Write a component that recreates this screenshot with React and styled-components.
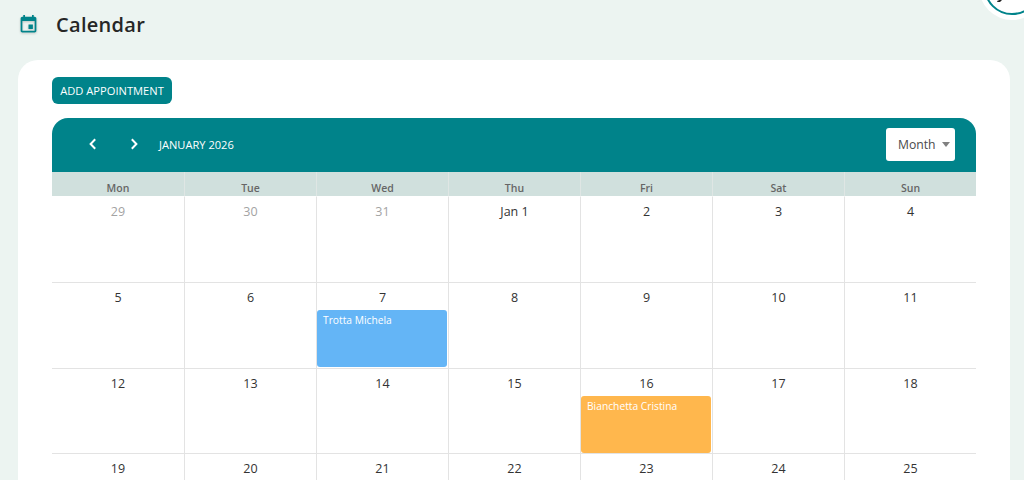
import React from "react";
import styled, { createGlobalStyle } from "styled-components";

const Global = createGlobalStyle`
  html, body { margin: 0; padding: 0; height: 100%; overflow: hidden; background: #ecf4f1; }
  body { font-family: "Open Sans", "Noto Sans", sans-serif; }
`;

const Page = styled.div`
  position: relative;
  height: 480px;
  overflow: hidden;
  padding: 0 14px 0 18px;
`;

const TitleBar = styled.header`
  height: 60px;
  padding-bottom: 12px;
  box-sizing: border-box;
  display: flex;
  align-items: center;
  gap: 17px;
`;

const CalendarIcon = styled.svg`
  filter: drop-shadow(0 1px 1px rgba(0, 0, 0, 0.2));
`;

const Title = styled.h1`
  margin: 0;
  font-size: 20px;
  font-weight: 600;
  letter-spacing: 0.3px;
  color: #262626;
`;

const Avatar = styled.div`
  position: absolute;
  right: -16px;
  top: -41px;
  width: 52px;
  height: 52px;
  border-radius: 50%;
  background: #fff;
  border: 2px solid #00838a;
  box-shadow: 0 0 0 5px #fff;
  box-sizing: content-box;
`;

const AvatarMark = styled.svg`
  position: absolute;
  left: 11px;
  top: 39px;
`;

const Card = styled.main`
  background: #fff;
  border-radius: 20px;
  padding: 17px 34px 0;
  height: 440px;
  box-sizing: border-box;
`;

const AddButton = styled.button`
  display: block;
  height: 27px;
  width: 120px;
  padding: 0;
  border: 0;
  border-radius: 6px;
  background: #00838a;
  color: #fff;
  font: 400 11.15px "Open Sans", sans-serif;
`;

const Calendar = styled.section`
  margin-top: 14px;
`;

const Toolbar = styled.div`
  height: 54px;
  padding: 0 21px 2px 32px;
  box-sizing: border-box;
  background: #00838a;
  border-radius: 16px 16px 0 0;
  display: flex;
  align-items: center;
  color: #fff;
`;

const NavButton = styled.button`
  width: 18px;
  height: 18px;
  padding: 0;
  margin-right: ${(p) => p.$gap}px;
  border: 0;
  background: none;
  color: #fff;
  display: flex;
  align-items: center;
  justify-content: center;
`;

const MonthLabel = styled.div`
  font-size: 11.1px;
  flex: 1;
`;

const ViewSelect = styled.div`
  width: 69px;
  height: 33px;
  border-radius: 3px;
  background: #fff;
  color: #4a4a4a;
  font-size: 12.2px;
  display: flex;
  align-items: center;
  padding-left: 12px;
  box-sizing: border-box;
  gap: 6px;
`;

const Caret = styled.span`
  width: 0;
  height: 0;
  border-left: 4.5px solid transparent;
  border-right: 4.5px solid transparent;
  border-top: 5px solid #808080;
`;

const Grid = styled.div`
  display: grid;
  grid-template-columns: repeat(7, 132px);
`;

const WeekDay = styled.div`
  height: 25px;
  background: #d0e0dd;
  background-clip: padding-box;
  border-left: ${(p) => (p.$first ? "0" : "1px solid #dfe6e4")};
  border-bottom: 1px solid #fff;
  box-sizing: border-box;
  text-align: center;
  color: #666;
  font-size: 10.5px;
  font-weight: 600;
  line-height: 32px;
`;

const Cell = styled.div`
  height: 85.8px;
  box-sizing: border-box;
  border-left: ${(p) => (p.$first ? "0" : "1px solid #e3e3e3")};
  border-bottom: 1px solid #e3e3e3;
  padding: 6px 0 0;
  text-align: center;
`;

const DayNumber = styled.div`
  height: 18px;
  font-size: 12.5px;
  line-height: 18px;
  color: ${(p) => (p.$muted ? "#a3a3a3" : "#333")};
`;

const Event = styled.div`
  margin: 3px 1px 0 0;
  height: 57px;
  border-radius: 3px;
  background: ${(p) => p.$color};
  color: #fff;
  font-size: 10.25px;
  line-height: 16px;
  text-align: left;
  padding: 2px 6px;
  box-sizing: border-box;
`;

const days = ["Mon", "Tue", "Wed", "Thu", "Fri", "Sat", "Sun"];
const cells = [
  ["29", true], ["30", true], ["31", true], ["Jan 1"], ["2"], ["3"], ["4"],
  ["5"], ["6"], ["7", false, "Trotta Michela", "#64b5f6"], ["8"], ["9"], ["10"], ["11"],
  ["12"], ["13"], ["14"], ["15"], ["16", false, "Bianchetta Cristina", "#ffb74d"], ["17"], ["18"],
  ["19"], ["20"], ["21"], ["22"], ["23"], ["24"], ["25"],
];

const Chevron = ({ d }) => (
  <svg width="12" height="12" viewBox="0 0 12 12" fill="none" stroke="currentColor" strokeWidth="2">
    <path d={d} />
  </svg>
);

export default function App() {
  return (
    <Page>
      <Global />
      <TitleBar>
        <CalendarIcon width="21" height="21" viewBox="0 0 24 24" fill="#00838a">
          <path d="M17 12h-5v5h5v-5zM16 1v2H8V1H6v2H5c-1.1 0-2 .9-2 2v14c0 1.1.9 2 2 2h14c1.1 0 2-.9 2-2V5c0-1.1-.9-2-2-2h-1V1h-2zm3 18H5V8h14v11z" />
        </CalendarIcon>
        <Title>Calendar</Title>
      </TitleBar>
      <Avatar>
        <AvatarMark width="5" height="2" viewBox="0 0 5 2">
          <path d="M0 1 L2.5 0 L5 0 L3 2 L0.5 2 Z" fill="#222" />
        </AvatarMark>
      </Avatar>
      <Card>
        <AddButton>ADD APPOINTMENT</AddButton>
        <Calendar>
          <Toolbar>
            <NavButton $gap={23}><Chevron d="M8.2 1.2 L3.6 6 L8.2 10.8" /></NavButton>
            <NavButton $gap={16}><Chevron d="M3.8 1.2 L8.4 6 L3.8 10.8" /></NavButton>
            <MonthLabel>JANUARY 2026</MonthLabel>
            <ViewSelect>Month<Caret /></ViewSelect>
          </Toolbar>
          <Grid>
            {days.map((d, i) => <WeekDay key={d} $first={i === 0}>{d}</WeekDay>)}
            {cells.map(([n, muted, ev, color], i) => (
              <Cell key={n} $first={i % 7 === 0}>
                <DayNumber $muted={muted}>{n}</DayNumber>
                {ev && <Event $color={color}>{ev}</Event>}
              </Cell>
            ))}
          </Grid>
        </Calendar>
      </Card>
    </Page>
  );
}
